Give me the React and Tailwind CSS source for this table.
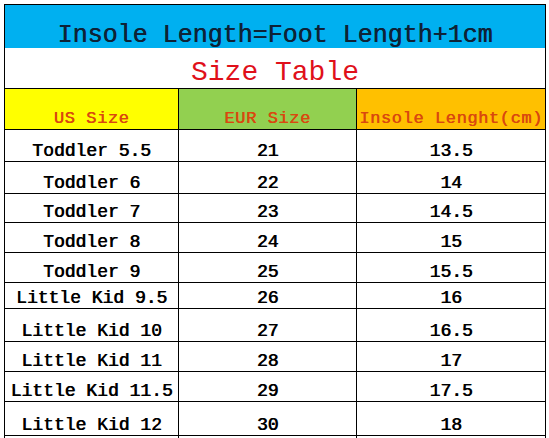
import React from "react";

const rows = [
  ["Toddler 5.5", "21", "13.5", 32],
  ["Toddler 6", "22", "14", 32],
  ["Toddler 7", "23", "14.5", 29],
  ["Toddler 8", "24", "15", 30],
  ["Toddler 9", "25", "15.5", 30],
  ["Little Kid 9.5", "26", "16", 26],
  ["Little Kid 10", "27", "16.5", 33],
  ["Little Kid 11", "28", "17", 30],
  ["Little Kid 11.5", "29", "17.5", 30],
  ["Little Kid 12", "30", "18", 34],
];

const mono = { fontFamily: '"Liberation Mono", "DejaVu Sans Mono", monospace' };

function Cell({ children, className = "" }) {
  return (
    <div
      className={`flex items-end justify-center border-r border-b border-black pb-[1px] whitespace-nowrap ${className}`}
    >
      {children}
    </div>
  );
}

export default function App() {
  return (
    <div className="w-[549px] h-[438px] overflow-hidden bg-white pt-[4px] pl-[4px]" style={mono}>
      <div className="w-[542px] border-l border-t border-black">
        <div className="h-[43px] bg-[#00b0f0] border-r border-black flex items-end justify-center">
          <span className="text-[25px] leading-[25px] text-[#0e2236] [text-shadow:0.5px_0_0_#0e2236]">
            Insole Length=Foot Length+1cm
          </span>
        </div>
        <div className="h-[41px] bg-white border-r border-b border-black flex items-end justify-center pb-[1px]">
          <span className="text-[28px] leading-[28px] text-[#e0101a]">Size Table</span>
        </div>
        <div className="grid grid-cols-[174px_178px_189px] h-[41px] text-[17px] leading-[18px] tracking-[0.6px] text-[#d9480f] [text-shadow:0.5px_0_0_#d9480f]">
          <Cell className="bg-[#ffff00]">US Size</Cell>
          <Cell className="bg-[#92d050]">EUR Size</Cell>
          <Cell className="bg-[#ffc000]">Insole Lenght(cm)</Cell>
        </div>
        {rows.map(([us, eur, cm, h]) => (
          <div
            key={us}
            className="grid grid-cols-[174px_178px_189px] text-[18px] leading-[18px] text-black [text-shadow:0.7px_0_0_#000]"
            style={{ height: h }}
          >
            <Cell>{us}</Cell>
            <Cell>{eur}</Cell>
            <Cell>{cm}</Cell>
          </div>
        ))}
        <div className="grid grid-cols-[174px_178px_189px] h-[20px]">
          <Cell />
          <Cell />
          <Cell />
        </div>
      </div>
    </div>
  );
}
